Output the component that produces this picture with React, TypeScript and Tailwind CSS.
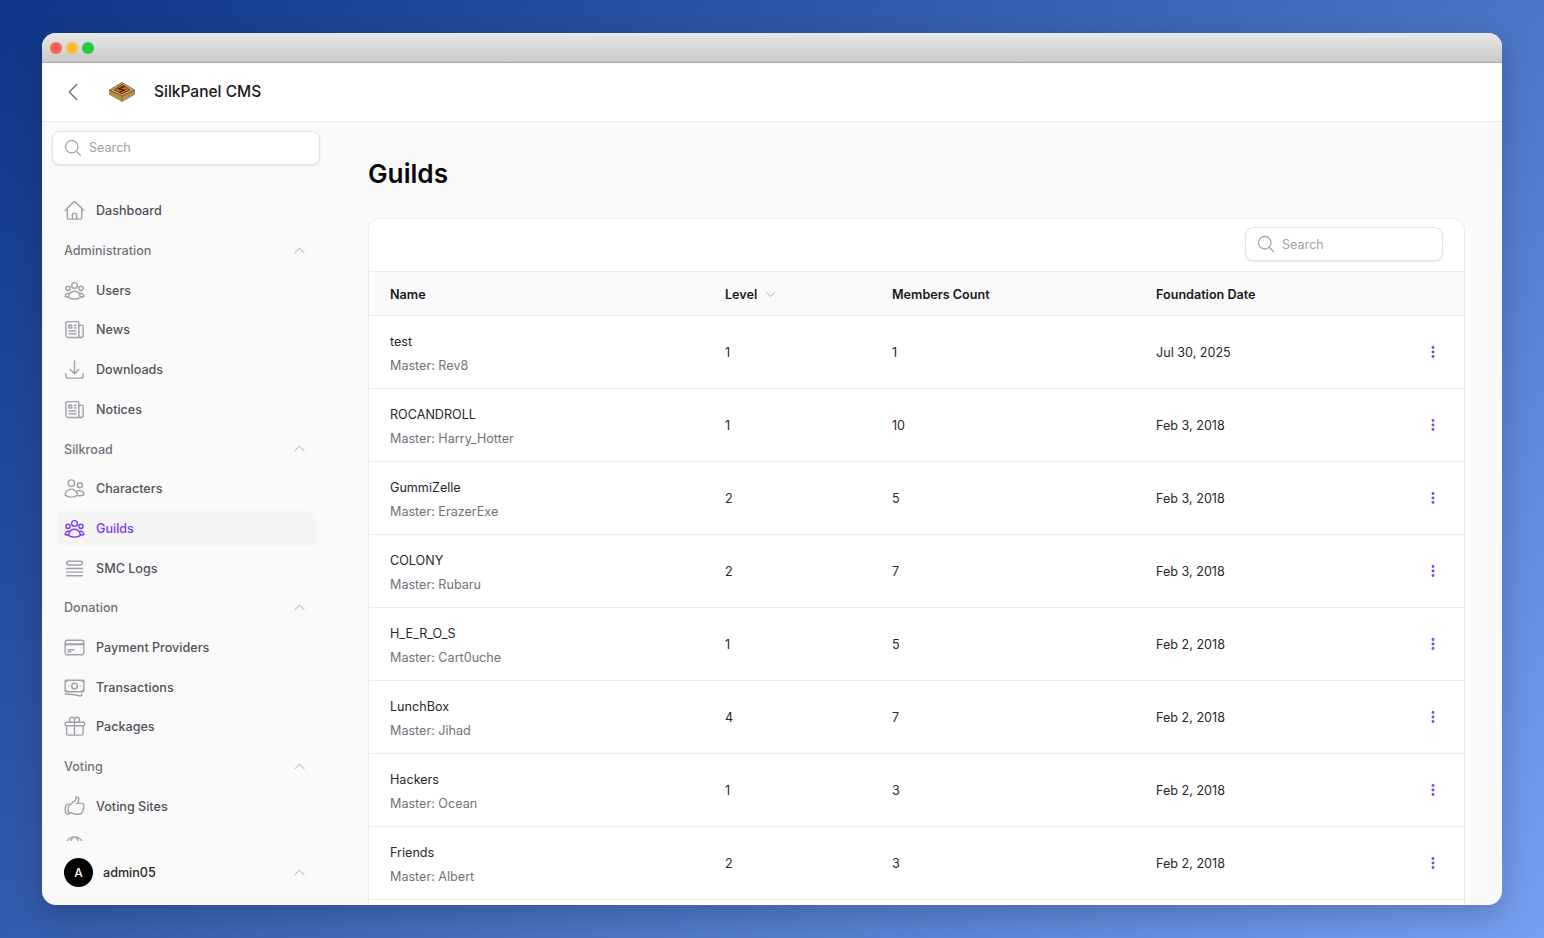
import type { ComponentType } from "react";
import {
  HiOutlineArrowDownTray,
  HiOutlineBanknotes,
  HiOutlineChevronDown,
  HiOutlineChevronLeft,
  HiOutlineChevronUp,
  HiOutlineCreditCard,
  HiOutlineEllipsisVertical,
  HiOutlineGift,
  HiOutlineGlobeAlt,
  HiOutlineHandThumbUp,
  HiOutlineHome,
  HiOutlineMagnifyingGlass,
  HiOutlineNewspaper,
  HiOutlineQueueList,
  HiOutlineUserGroup,
  HiOutlineUsers,
} from "react-icons/hi2";

type Icon = ComponentType<{ className?: string }>;

type NavEntry =
  | { kind: "item"; label: string; icon: Icon; active?: boolean }
  | { kind: "group"; label: string };

const nav: NavEntry[] = [
  { kind: "item", label: "Dashboard", icon: HiOutlineHome },
  { kind: "group", label: "Administration" },
  { kind: "item", label: "Users", icon: HiOutlineUserGroup },
  { kind: "item", label: "News", icon: HiOutlineNewspaper },
  { kind: "item", label: "Downloads", icon: HiOutlineArrowDownTray },
  { kind: "item", label: "Notices", icon: HiOutlineNewspaper },
  { kind: "group", label: "Silkroad" },
  { kind: "item", label: "Characters", icon: HiOutlineUsers },
  { kind: "item", label: "Guilds", icon: HiOutlineUserGroup, active: true },
  { kind: "item", label: "SMC Logs", icon: HiOutlineQueueList },
  { kind: "group", label: "Donation" },
  { kind: "item", label: "Payment Providers", icon: HiOutlineCreditCard },
  { kind: "item", label: "Transactions", icon: HiOutlineBanknotes },
  { kind: "item", label: "Packages", icon: HiOutlineGift },
  { kind: "group", label: "Voting" },
  { kind: "item", label: "Voting Sites", icon: HiOutlineHandThumbUp },
];

const guilds = [
  { name: "test", master: "Rev8", level: 1, members: 1, date: "Jul 30, 2025" },
  { name: "ROCANDROLL", master: "Harry_Hotter", level: 1, members: 10, date: "Feb 3, 2018" },
  { name: "GummiZelle", master: "ErazerExe", level: 2, members: 5, date: "Feb 3, 2018" },
  { name: "COLONY", master: "Rubaru", level: 2, members: 7, date: "Feb 3, 2018" },
  { name: "H_E_R_O_S", master: "Cart0uche", level: 1, members: 5, date: "Feb 2, 2018" },
  { name: "LunchBox", master: "Jihad", level: 4, members: 7, date: "Feb 2, 2018" },
  { name: "Hackers", master: "Ocean", level: 1, members: 3, date: "Feb 2, 2018" },
  { name: "Friends", master: "Albert", level: 2, members: 3, date: "Feb 2, 2018" },
];

const tableColumns = "grid grid-cols-[335px_167px_264px_268px_18px] items-center pl-[21px]";

function Logo() {
  return (
    <svg viewBox="0 0 26 20" className="h-5 w-[26px]">
      <path d="M0.5 8 13 14 25.5 8v4.5L13 19.5.5 12.5z" fill="#b58e50" stroke="#7d5f30" strokeWidth="0.5" />
      <path d="M13 14v5.5" stroke="#7d5f30" strokeWidth="0.8" />
      <path d="M0.5 8 13 0.5 25.5 8 13 14z" fill="#c9a263" stroke="#5e4320" strokeWidth="0.7" />
      <path d="M5 7.8 13 2.6l8 5.2-8 4z" fill="#dc6f1f" stroke="#4a2c10" strokeWidth="0.7" />
      <path d="M15.5 4.4 9.8 6.8l5.6 1.4-5 2.2" fill="none" stroke="#2e1c0c" strokeWidth="1.2" />
    </svg>
  );
}

function SearchBox({ className, inputClassName = "" }: { className: string; inputClassName?: string }) {
  return (
    <div className={`flex h-[34px] items-center gap-[6px] rounded-lg border border-[#e4e4e7] bg-white pl-[10px] shadow-[0_1px_2px_rgba(0,0,0,0.1)] ${className}`}>
      <HiOutlineMagnifyingGlass className="h-5 w-5 shrink-0 text-[#a1a1aa]" />
      <input
        readOnly
        placeholder="Search"
        className={`w-full bg-transparent text-[12.6px] text-[#3f3f46] outline-none placeholder:text-[#a1a1aa] ${inputClassName}`}
      />
    </div>
  );
}

function NavRow({ entry }: { entry: NavEntry }) {
  if (entry.kind === "group") {
    return (
      <div className="flex h-[35.7px] shrink-0 items-center justify-between pl-[7px] pr-[9px] text-[12.6px] font-medium text-[#71717a]">
        <span className="pt-[2px]">{entry.label}</span>
        <HiOutlineChevronUp className="h-[15px] w-[15px] text-[#a1a1aa]" />
      </div>
    );
  }
  const ItemIcon = entry.icon;
  return (
    <div
      className={`flex h-[35.7px] shrink-0 items-center gap-[10px] rounded-lg pl-[6px] text-[12.6px] font-medium ${
        entry.active ? "bg-[#f4f4f5] text-[#7c3aed]" : "text-[#52525b]"
      }`}
    >
      <ItemIcon className={`h-[23px] w-[23px] shrink-0 ${entry.active ? "text-[#7c3aed]" : "text-[#a1a1aa]"}`} />
      <span className="pt-[2px]">{entry.label}</span>
    </div>
  );
}

function Sidebar() {
  return (
    <aside className="flex w-[289px] shrink-0 flex-col overflow-hidden">
      <div className="px-[10px] pt-[9px]">
        <SearchBox className="w-[268px]" />
      </div>
      <nav className="flex h-[676px] flex-col gap-[4px] overflow-hidden pl-[15px] pr-[15px] pt-[28px]">
        {nav.map((entry) => (
          <NavRow key={entry.label} entry={entry} />
        ))}
        {/* next item is cut off by the scroll area, only the top of its icon shows */}
        <div className="flex h-[35.7px] shrink-0 items-center pl-[6px]">
          <HiOutlineGlobeAlt className="h-[23px] w-[23px] text-[#a1a1aa]" />
        </div>
      </nav>
      <div className="flex items-center pl-[22px] pr-[24px] pt-[17px]">
        <div className="flex h-[29px] w-[29px] items-center justify-center rounded-full bg-black text-xs font-medium text-white">
          A
        </div>
        <span className="ml-[10px] flex-1 pt-[2px] text-[12.6px] font-medium text-[#27272a]">admin05</span>
        <HiOutlineChevronUp className="h-[15px] w-[15px] text-[#a1a1aa]" />
      </div>
    </aside>
  );
}

function GuildTable() {
  return (
    <div className="mt-[26px] overflow-hidden rounded-t-xl border border-[#ececee] bg-white">
      <div className="flex h-[52px] items-center justify-end pb-[2px] pr-[21px]">
        <SearchBox className="w-[198px]" inputClassName="pt-[2px]" />
      </div>
      <div className={`${tableColumns} h-[45px] border-y border-[#ececee] bg-[#fafafa] pt-[3px] text-[12.6px] font-semibold text-[#18181b]`}>
        <span>Name</span>
        <span className="flex items-center gap-[7px]">
          Level
          <HiOutlineChevronDown className="h-[13px] w-[13px] text-[#a1a1aa]" />
        </span>
        <span>Members Count</span>
        <span>Foundation Date</span>
      </div>
      {guilds.map((g) => (
        <div key={g.name} className={`${tableColumns} h-[73px] border-b border-[#ececee] pt-[3px] text-[12.6px] text-[#27272a]`}>
          <div>
            <div className="leading-[18px]">{g.name}</div>
            <div className="mt-[6px] leading-[18px] text-[#71717a]">Master: {g.master}</div>
          </div>
          <span>{g.level}</span>
          <span>{g.members}</span>
          <span>{g.date}</span>
          <HiOutlineEllipsisVertical className="mb-[3px] h-[18px] w-[18px] stroke-[2.4] text-[#7c3aed]" />
        </div>
      ))}
      <div className="h-[20px]" />
    </div>
  );
}

export default function App() {
  return (
    <div className="h-[938px] w-[1544px] overflow-hidden bg-[linear-gradient(135deg,#0f3686_0%,#3f68b8_50%,#769ff0_100%)] px-[42px] pt-[33px] font-['Inter',sans-serif]">
      <div className="flex h-[872px] flex-col overflow-hidden rounded-[14px] bg-[#fafafa] shadow-[0_10px_30px_rgba(0,0,0,0.2)]">
        <div className="flex h-[30px] shrink-0 items-center gap-1 border-b border-[#a9a9a9] bg-linear-to-b from-[#e8e8e8] to-[#c9c9c9] pl-2">
          <span className="h-3 w-3 rounded-full bg-[#ff5f57]" />
          <span className="h-3 w-3 rounded-full bg-[#febc2e]" />
          <span className="h-3 w-3 rounded-full bg-[#28c840]" />
        </div>
        <header className="flex h-[59px] shrink-0 items-center border-b border-[#ececee] bg-white pb-[1px] pl-[19px]">
          <HiOutlineChevronLeft className="h-6 w-6 text-[#71717a]" />
          <div className="ml-[24px]">
            <Logo />
          </div>
          <span className="ml-[19px] text-[15.5px] font-medium text-[#18181b]">SilkPanel CMS</span>
        </header>
        <div className="flex min-h-0 flex-1">
          <Sidebar />
          <main className="min-w-0 flex-1 overflow-hidden px-[37px] pt-[34px]">
            <h1 className="text-[26.2px] leading-9 font-semibold text-[#09090b]">Guilds</h1>
            <GuildTable />
          </main>
        </div>
      </div>
    </div>
  );
}
